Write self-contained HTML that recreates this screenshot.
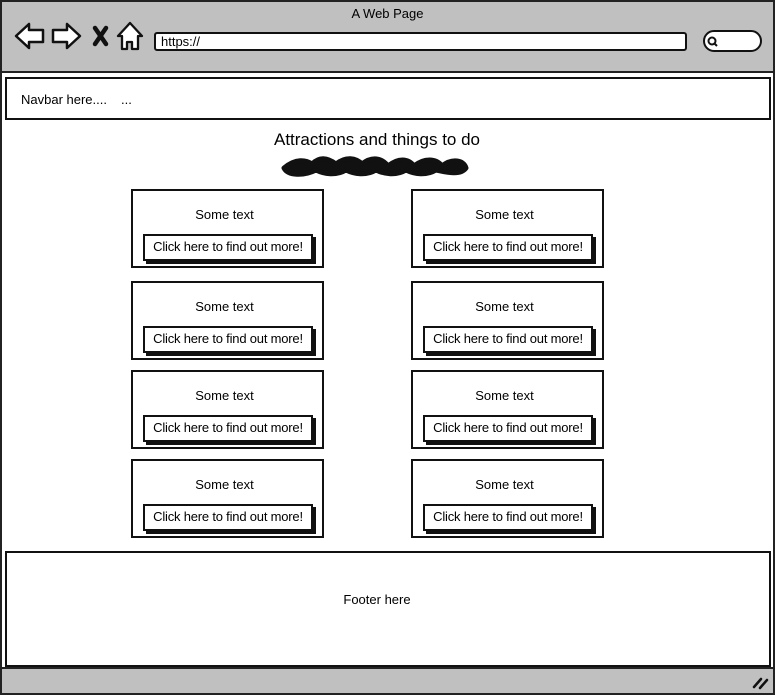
<!DOCTYPE html>
<html><head><style>
*{box-sizing:border-box;margin:0;padding:0}
body{width:775px;height:695px;background:#fff;font-family:"Liberation Sans",sans-serif;color:#000;position:relative;overflow:hidden}
.a{position:absolute}
.frame{left:0;top:0;width:775px;height:695px;border:2px solid #222;background:#fff}
.top{left:2px;top:2px;width:771px;height:71px;background:#c0c0c0;border-bottom:2px solid #222}
.bot{left:2px;top:667px;width:771px;height:26px;background:#c0c0c0;border-top:2px solid #222}
.box{border:2px solid #111;background:#fff}
.card{position:absolute;width:193px;height:79px;border:2px solid #111;background:#fff}
.card .t{position:absolute;left:0;right:6px;top:16px;text-align:center;font-size:13px}
.card .b{position:absolute;left:10px;top:43px;width:170px;height:27px;border:2px solid #111;background:#fff;box-shadow:3px 3px 0 #111;font-size:13px;text-align:center;line-height:22px;white-space:nowrap;letter-spacing:-0.2px}
</style></head><body>
<div class="a frame"></div>
<div class="a top"></div>
<div class="a" style="left:0;top:6px;width:775px;text-align:center;font-size:13px">A Web Page</div>
<svg class="a" style="left:14px;top:20px" width="135" height="32" viewBox="0 0 135 32">
<path d="M2 16 L15 4 L15 10 L29 10 L29 22 L15 22 L15 28 Z" fill="#fff" stroke="#111" stroke-width="2.5" stroke-linejoin="round"/>
<path d="M66 16 L53 4 L53 10 L39 10 L39 22 L53 22 L53 28 Z" fill="#fff" stroke="#111" stroke-width="2.5" stroke-linejoin="round"/>
<path d="M81 8 L92 24 M92 8 L81 24" stroke="#111" stroke-width="4.5" stroke-linecap="round"/>
<path d="M116 3 L104 16 L108 16 L108 29 L113 29 L113 22 L118 22 L118 29 L124 29 L124 16 L128 16 Z" fill="#fff" stroke="#111" stroke-width="2.3" stroke-linejoin="round"/>
</svg>
<div class="a" style="left:154px;top:32px;width:533px;height:19px;border:2px solid #111;border-radius:3px;background:#fff;font-size:13px;line-height:15px;padding-left:5px">https://</div>
<div class="a" style="left:703px;top:30px;width:59px;height:22px;border:2px solid #111;border-radius:11px;background:#fff"></div>
<svg class="a" style="left:706px;top:35px" width="14" height="13"><circle cx="6" cy="6" r="3.5" fill="none" stroke="#111" stroke-width="2"/><path d="M8 8 L11 11" stroke="#111" stroke-width="2"/></svg>
<div class="a box" style="left:5px;top:77px;width:766px;height:43px"></div>
<div class="a" style="left:21px;top:92px;font-size:13px">Navbar here....</div>
<div class="a" style="left:121px;top:92px;font-size:13px">...</div>
<div class="a" style="left:0;top:130px;width:754px;text-align:center;font-size:17px">Attractions and things to do</div>
<svg class="a" style="left:276px;top:150px" width="200" height="30">
<path d="M8 18 C20 8 30 10 36 14 C44 6 52 8 60 14 C70 6 80 8 86 14 C96 6 106 8 112 16 C122 8 132 8 138 16 C148 8 160 8 166 16 C176 8 188 10 190 18 C184 26 170 22 160 20 C150 26 138 24 130 20 C120 26 108 24 100 20 C90 26 78 24 70 20 C60 26 48 24 40 20 C28 26 12 26 8 18 Z" fill="#111" stroke="#111" stroke-width="5" stroke-linejoin="round"/>
</svg>
<div class="card" style="left:131px;top:189px"><div class="t">Some text</div><div class="b">Click here to find out more!</div></div>
<div class="card" style="left:411px;top:189px"><div class="t">Some text</div><div class="b">Click here to find out more!</div></div>
<div class="card" style="left:131px;top:281px"><div class="t">Some text</div><div class="b">Click here to find out more!</div></div>
<div class="card" style="left:411px;top:281px"><div class="t">Some text</div><div class="b">Click here to find out more!</div></div>
<div class="card" style="left:131px;top:370px"><div class="t">Some text</div><div class="b">Click here to find out more!</div></div>
<div class="card" style="left:411px;top:370px"><div class="t">Some text</div><div class="b">Click here to find out more!</div></div>
<div class="card" style="left:131px;top:459px"><div class="t">Some text</div><div class="b">Click here to find out more!</div></div>
<div class="card" style="left:411px;top:459px"><div class="t">Some text</div><div class="b">Click here to find out more!</div></div>
<div class="a box" style="left:5px;top:551px;width:766px;height:116px"></div>
<div class="a" style="left:0;top:592px;width:754px;text-align:center;font-size:13px">Footer here</div>
<div class="a bot"></div>
<svg class="a" style="left:752px;top:674px" width="18" height="16"><path d="M2 13 L9 5 M8 14 L15 6" stroke="#111" stroke-width="2.5" stroke-linecap="round"/></svg>
</body></html>
